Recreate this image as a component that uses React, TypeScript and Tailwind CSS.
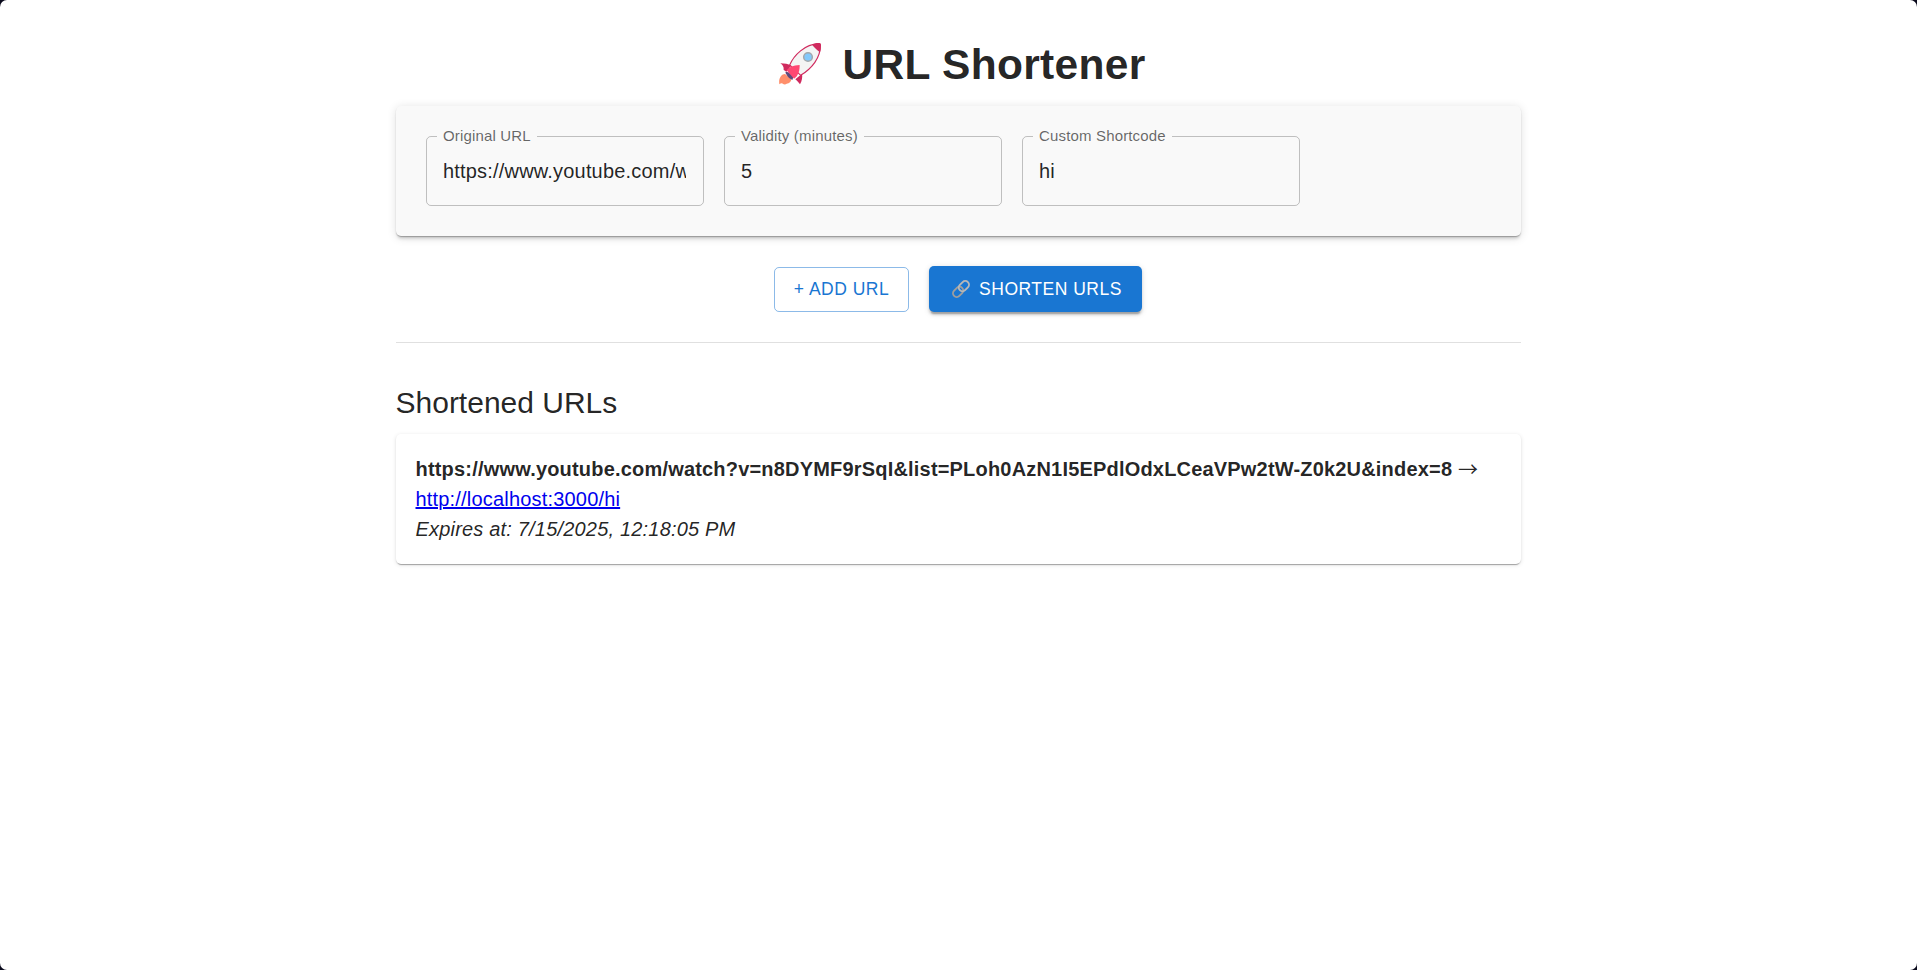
type FieldProps = { label: string; value: string };

function Rocket() {
  return (
    <svg className="mt-1 h-[43px] w-[43px] shrink-0 self-start" viewBox="27 21 129 129" aria-hidden="true">
      <path d="M45 117C34 117 25 130 28 148C32 145 35 144 38 146C42 149 47 149 50 146C58 145 64 140 64 132Z" fill="#ff8f6b" />
      <path d="M31 85C45 85 54 87 63 92L50 110L41 105C42 96 38 90 31 85Z" fill="#d02a5e" />
      <path d="M76 133L96 116C98 126 96 138 90 148C86 143 82 138 76 133Z" fill="#d02a5e" />
      <path d="M59 90C72 60 104 28 146 26Q151 26 151 31C152 68 126 100 92 121Z" fill="#f4f4f4" stroke="#d02a5e" strokeWidth="3.5" />
      <path d="M126 29C134 25 144 23 150 25Q153 27 153 31C153 38 152 45 150 52C142 46 134 39 126 29Z" fill="#d02a5e" />
      <path d="M46 110L55 112L70 123L68 134C58 132 49 122 46 110Z" fill="#5c4a7b" />
      <path d="M50 106C58 96 69 91 89 90C89 101 88 111 82 121C79 126 76 129 72 131Z" fill="#ff4672" />
      <circle cx="114" cy="66" r="13" fill="#83c9fb" stroke="#a3a8ac" strokeWidth="4.5" />
    </svg>
  );
}

function Chain() {
  return (
    <svg className="h-[18px] w-[18px] shrink-0" viewBox="0 0 19 19" fill="none" aria-hidden="true">
      <g transform="rotate(-45 9.5 9.5)">
        <rect x="-0.8" y="5.6" width="12" height="7.8" rx="3.9" stroke="#9e9e9e" strokeWidth="2" />
        <rect x="7.8" y="5.6" width="12" height="7.8" rx="3.9" stroke="#b8b8b8" strokeWidth="2" />
      </g>
    </svg>
  );
}

function Field({ label, value }: FieldProps) {
  return (
    <fieldset className="-mt-2 h-[78px] w-[278px] min-w-0 rounded-[5px] border border-black/[.23] px-[10px]">
      <legend className="h-4 px-[6px] text-[15px] leading-4 tracking-[0.16px] text-black/60">{label}</legend>
      <input
        readOnly
        aria-label={label}
        defaultValue={value}
        className="mx-[6px] mt-[12px] block h-[29px] w-[243px] bg-transparent text-[20px] tracking-[0.188px] text-black/[.87] outline-none"
      />
    </fieldset>
  );
}

export default function App() {
  return (
    <div className="h-[970px] bg-[#0a0a1c] font-['Liberation_Sans',Arial,sans-serif]">
      <div className="h-full rounded-[7px] bg-white pt-[38px] text-black/[.87]">
        <main className="mx-auto w-[1125px]">
          <h1 className="flex h-[54px] items-center justify-center pl-[8px] text-[42.5px] leading-[54px] font-bold tracking-[0.31px]">
            <Rocket />
            <span className="ml-[20px]">URL Shortener</span>
          </h1>

          <section className="mt-[14px] flex h-[130px] gap-5 rounded-[5px] bg-[#f9f9f9] p-[30px] shadow-[0px_3.75px_3.75px_-2.5px_rgba(0,0,0,0.2),0px_1px_1px_0px_rgba(0,0,0,0.22),0px_1.25px_10px_0px_rgba(0,0,0,0.12)]">
            <Field label="Original URL" value="https://www.youtube.com/watch?v=n8DYMF9rSqI&list=PLoh0AzN1I5EPdlOdxLCeaVPw2tW-Z0k2U&index=8" />
            <Field label="Validity (minutes)" value="5" />
            <Field label="Custom Shortcode" value="hi" />
          </section>

          <div className="mt-[30px] flex h-[46px] items-center justify-center gap-5 pr-px text-[17.5px] tracking-[0.5px]">
            <button className="mt-px h-[45px] w-[135px] rounded-[5px] border border-[#1976d2]/50 text-[#1976d2]">+ ADD URL</button>
            <button className="flex h-[46px] w-[213px] items-center justify-center gap-[9px] rounded-[5px] bg-[#1976d2] pl-[3px] text-white shadow-[0px_3.75px_1.25px_-2.5px_rgba(0,0,0,0.2),0px_2.5px_2.5px_0px_rgba(0,0,0,0.14),0px_1.25px_6.25px_0px_rgba(0,0,0,0.12)]">
              <Chain />
              <span>SHORTEN URLS</span>
            </button>
          </div>

          <hr className="mt-[30px] border-black/[.12]" />

          <h2 className="mt-10 -ml-[0.5px] text-[30px] leading-10">Shortened URLs</h2>

          <article className="mt-[11px] h-[130px] rounded-[5px] bg-white p-5 pl-[19.5px] text-[20px] leading-[30px] tracking-[0.188px] shadow-[0px_3px_1px_-2px_rgba(0,0,0,0.2),0px_1px_1px_0px_rgba(0,0,0,0.14),0px_1px_4px_0px_rgba(0,0,0,0.12)]">
            <p className="h-[30px] whitespace-nowrap">
              <strong>https://www.youtube.com/watch?v=n8DYMF9rSqI&amp;list=PLoh0AzN1I5EPdlOdxLCeaVPw2tW-Z0k2U&amp;index=8</strong>{' '}
              <span className="inline-block translate-y-px font-['Noto_Sans_CJK_JP',sans-serif] leading-none">→</span>
            </p>
            <p><a className="text-[#0000ee] underline" href="#hi">http://localhost:3000/hi</a></p>
            <p className="italic">Expires at: 7/15/2025, 12:18:05 PM</p>
          </article>
        </main>
      </div>
    </div>
  );
}
